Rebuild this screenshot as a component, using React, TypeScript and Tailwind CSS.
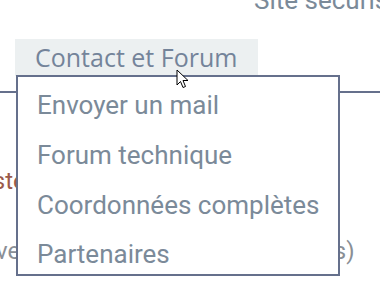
import { useState } from 'react';

const menuItems = ['Envoyer un mail', 'Forum technique', 'Coordonnées complètes', 'Partenaires'];

export default function App() {
  const [open] = useState(true);

  return (
    <div className="relative h-[294px] w-[380px] overflow-hidden bg-white font-['Roboto',sans-serif]">
      {/* Top bar */}
      <div className="h-[39px] overflow-hidden">
        <div className="mt-[-19px] whitespace-nowrap pl-[254px] text-[26px] text-[#7b8a99]">Site sécurisé</div>
      </div>

      {/* Nav */}
      <div className="h-[54px] border-b-2 border-[#65708c] pl-[15px]">
        <div className="flex h-[37px] w-[243px] items-center bg-[#ecf0f1] pl-[20px] font-['Open_Sans',sans-serif] text-[25px] text-[#74849a]">
          Contact et Forum
        </div>
      </div>

      {/* Page content behind the menu */}
      <div className="whitespace-nowrap pt-[70px] text-[24px]">
        <div className="ml-[-26px] text-[#9b5a4a]">Liste des services</div>
        <div className="ml-[-48px] mt-[34px] text-[#8a8f96]">Nouvelles versions (mises à jour, lots)</div>
      </div>

      {open && (
        <div className="absolute left-[16px] top-[75px] h-[201px] w-[324px] border-2 border-[#65708c] bg-white pt-[4px]">
          {menuItems.map((item) => (
            <div key={item} className="flex h-[49.7px] items-center pl-[19px] text-[26px] text-[#7b8a99]">
              {item}
            </div>
          ))}
        </div>
      )}

      {/* Mouse pointer */}
      <svg className="absolute left-[176px] top-[69px]" width="13" height="20" viewBox="0 0 13 20">
        <path d="M1 1 L1 16 L4.5 12.5 L7 18.5 L9.5 17.5 L7 11.5 L12 11.5 Z" fill="white" stroke="black" strokeWidth="1" strokeLinejoin="round" />
      </svg>
    </div>
  );
}
